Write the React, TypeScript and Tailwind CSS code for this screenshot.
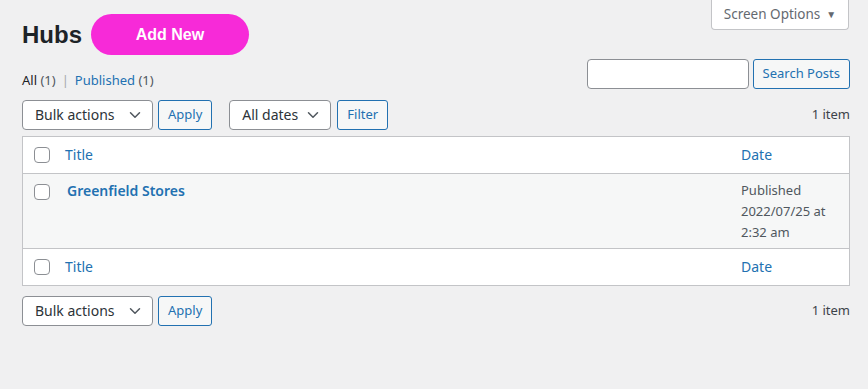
import { ChevronDown } from 'lucide-react';

const font = 'font-["Noto_Sans",sans-serif]';

function Select({ label, width }: { label: string; width: string }) {
  return (
    <div
      className={`flex h-[30px] items-center justify-between rounded border border-[#8c8f94] bg-white pl-[12px] pr-[8px] text-[14px] text-[#2c3338] ${width}`}
    >
      <span>{label}</span>
      <ChevronDown className="h-[18px] w-[18px] text-[#50575e]" strokeWidth={2} />
    </div>
  );
}

function Button({ label }: { label: string }) {
  return (
    <button className="h-[30px] rounded-[3px] border border-[#2271b1] bg-[#f6f7f7] px-[9px] text-[13px] text-[#2271b1]">
      {label}
    </button>
  );
}

function Checkbox() {
  return <div className="h-4 w-4 shrink-0 rounded-[4px] border border-[#8c8f94] bg-white" />;
}

function HeadRow({ top }: { top?: boolean }) {
  return (
    <div className={`flex h-[37px] items-center bg-white ${top ? 'border-b' : 'border-t'} border-[#c3c4c7]`}>
      <div className="w-[42px] pl-[11px]">
        <Checkbox />
      </div>
      <div className="flex-1 text-[14px] text-[#2271b1]">Title</div>
      <div className="w-[108px] text-[14px] text-[#2271b1]">Date</div>
    </div>
  );
}

export default function App() {
  return (
    <div className={`relative h-[389px] w-[868px] bg-[#f0f0f1] ${font}`}>
      {/* Screen Options tab */}
      <div className="absolute right-[19px] top-0 flex h-[30px] w-[138px] items-center justify-center gap-[6px] rounded-b border border-t-0 border-[#c3c4c7] bg-white text-[13.5px] text-[#646970]">
        <span>Screen Options</span>
        <span className="text-[10px]">▼</span>
      </div>

      <div className="pl-[22px] pr-[18px] pt-[14px]">
        <div className="flex items-center gap-[9px]">
          <h1 className='font-["Liberation_Sans",Arial,sans-serif] text-[24px] font-bold text-[#1d2327]'>Hubs</h1>
          <div className='flex h-[41px] w-[158px] items-center justify-center rounded-full bg-[#f72ad8] font-["Liberation_Sans",Arial,sans-serif] text-[16px] font-bold text-white'>
            Add New
          </div>
        </div>

        <div className="mt-[4px] flex items-start justify-between">
          <div className="pt-[12px] text-[13px] text-[#50575e]">
            <span className="text-[#1d2327]">All</span> <span className="text-[#50575e]">(1)</span>
            <span className="mx-[6px] text-[#a7aaad]">|</span>
            <span className="text-[#2271b1]">Published</span> <span className="text-[#50575e]">(1)</span>
          </div>
          <div className="flex gap-[4px]">
            <div className="h-[30px] w-[162px] rounded border border-[#8c8f94] bg-white" />
            <Button label="Search Posts" />
          </div>
        </div>

        <div className="mt-[9px] flex items-center justify-between">
          <div className="flex items-center">
            <Select label="Bulk actions" width="w-[131px]" />
            <div className="ml-[5px]">
              <Button label="Apply" />
            </div>
            <div className="ml-[17px]">
              <Select label="All dates" width="w-[102px]" />
            </div>
            <div className="ml-[6px]">
              <Button label="Filter" />
            </div>
          </div>
          <span className="text-[13px] text-[#3c434a]">1 item</span>
        </div>

        <div className="mt-[6px] border border-[#c3c4c7]">
          <HeadRow top />
          <div className="flex h-[74px] items-start bg-[#f6f7f7] pt-[6px]">
            <div className="w-[42px] pl-[11px] pt-[4px]">
              <Checkbox />
            </div>
            <div className="flex-1 pl-[2px] text-[14px] font-semibold text-[#2271b1]">Greenfield Stores</div>
            <div className="w-[108px] text-[13px] leading-[21px] text-[#50575e]">
              Published
              <br />
              2022/07/25 at
              <br />
              2:32 am
            </div>
          </div>
          <HeadRow />
        </div>

        <div className="mt-[10px] flex items-center justify-between">
          <div className="flex items-center">
            <Select label="Bulk actions" width="w-[131px]" />
            <div className="ml-[5px]">
              <Button label="Apply" />
            </div>
          </div>
          <span className="text-[13px] text-[#3c434a]">1 item</span>
        </div>
      </div>
    </div>
  );
}
